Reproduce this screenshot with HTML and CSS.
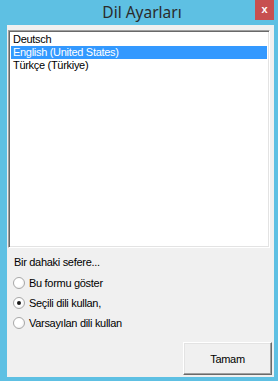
FILE: index.html
```html
<!DOCTYPE html>
<html lang="tr">
<head>
    <meta charset="UTF-8">
    <title>Dil Ayarları</title>
    <link rel="stylesheet" href="styles.css">
</head>
<body>
    <div class="window">
        <div class="titlebar">
            <span class="title">Dil Ayarları</span>
            <span class="close">x</span>
        </div>
        <div class="client">
            <div class="listbox">
                <div class="item">Deutsch</div>
                <div class="item selected">English (United States)</div>
                <div class="item">Türkçe (Türkiye)</div>
            </div>
            <div class="options">
                <div class="caption">Bir dahaki sefere...</div>
                <label class="radio"><span class="dot"></span>Bu formu göster</label>
                <label class="radio"><span class="dot checked"></span>Seçili dili kullan,</label>
                <label class="radio"><span class="dot"></span>Varsayılan dili kullan</label>
            </div>
            <div class="actions">
                <button class="btn">Tamam</button>
            </div>
        </div>
    </div>
</body>
</html>
```

FILE: styles.css
```css
body {
    margin: 0;
    font-family: "Liberation Sans", Arial, sans-serif;
    font-size: 11px;
    letter-spacing: -0.3px;
}
.window {
    width: 278px;
    height: 381px;
    background-color: #5ec0e3;
    display: flex;
    flex-direction: column;
    box-sizing: border-box;
    padding: 0 4px 4px 7px;
}
.titlebar {
    height: 25px;
    display: flex;
    align-items: center;
    justify-content: center;
    position: relative;
}
.title {
    font-family: "Noto Sans", "Open Sans", sans-serif;
    font-size: 15.5px;
    letter-spacing: 0;
    color: #2b2b2b;
    margin-top: -2px;
    margin-left: 3px;
}
.close {
    position: absolute;
    top: 0;
    right: 0;
    width: 19px;
    height: 20px;
    background-color: #c75050;
    color: #fff;
    font-weight: bold;
    font-size: 11px;
    letter-spacing: 0;
    text-align: center;
    line-height: 19px;
}
.client {
    flex: 1;
    background-color: #f0f0f0;
    display: flex;
    flex-direction: column;
}
.listbox {
    margin: 5px 0 0 1px;
    width: 262px;
    height: 218px;
    box-sizing: border-box;
    background-color: #fff;
    border: 1px solid;
    border-color: #a0a0a0 #fff #fff #a0a0a0;
    box-shadow: inset 1px 1px #696969, inset -1px -1px #e3e3e3;
    padding: 2px 2px;
}
.item {
    height: 13px;
    line-height: 13px;
    padding-left: 2px;
    color: #000;
}
.item.selected {
    background-color: #3399ff;
    color: #fff;
}
.options {
    padding: 8px 0 0 6px;
    display: flex;
    flex-direction: column;
}
.caption {
    height: 13px;
    line-height: 13px;
    margin-bottom: 4px;
    padding-left: 1px;
}
.radio {
    display: flex;
    align-items: center;
    height: 20px;
    color: #000;
}
.dot {
    width: 10px;
    height: 10px;
    border-radius: 50%;
    border: 1px solid #a8a8a8;
    background: radial-gradient(circle at 40% 40%, #fff 45%, #e6e6e6 100%);
    margin-right: 4px;
    display: flex;
    align-items: center;
    justify-content: center;
}
.dot.checked::after {
    content: "";
    width: 4px;
    height: 4px;
    border-radius: 50%;
    background-color: #1a1a1a;
}
.actions {
    display: flex;
    justify-content: flex-end;
    padding: 9px 2px 0 0;
}
.btn {
    width: 89px;
    height: 33px;
    box-sizing: border-box;
    background-color: #f0f0f0;
    border: 1px solid;
    border-color: #fff #696969 #696969 #fff;
    box-shadow: inset -1px -1px #a0a0a0, inset 1px 1px #e3e3e3;
    font-family: "Liberation Sans", Arial, sans-serif;
    font-size: 11px;
    letter-spacing: -0.3px;
    color: #000;
    padding: 0;
}
```
